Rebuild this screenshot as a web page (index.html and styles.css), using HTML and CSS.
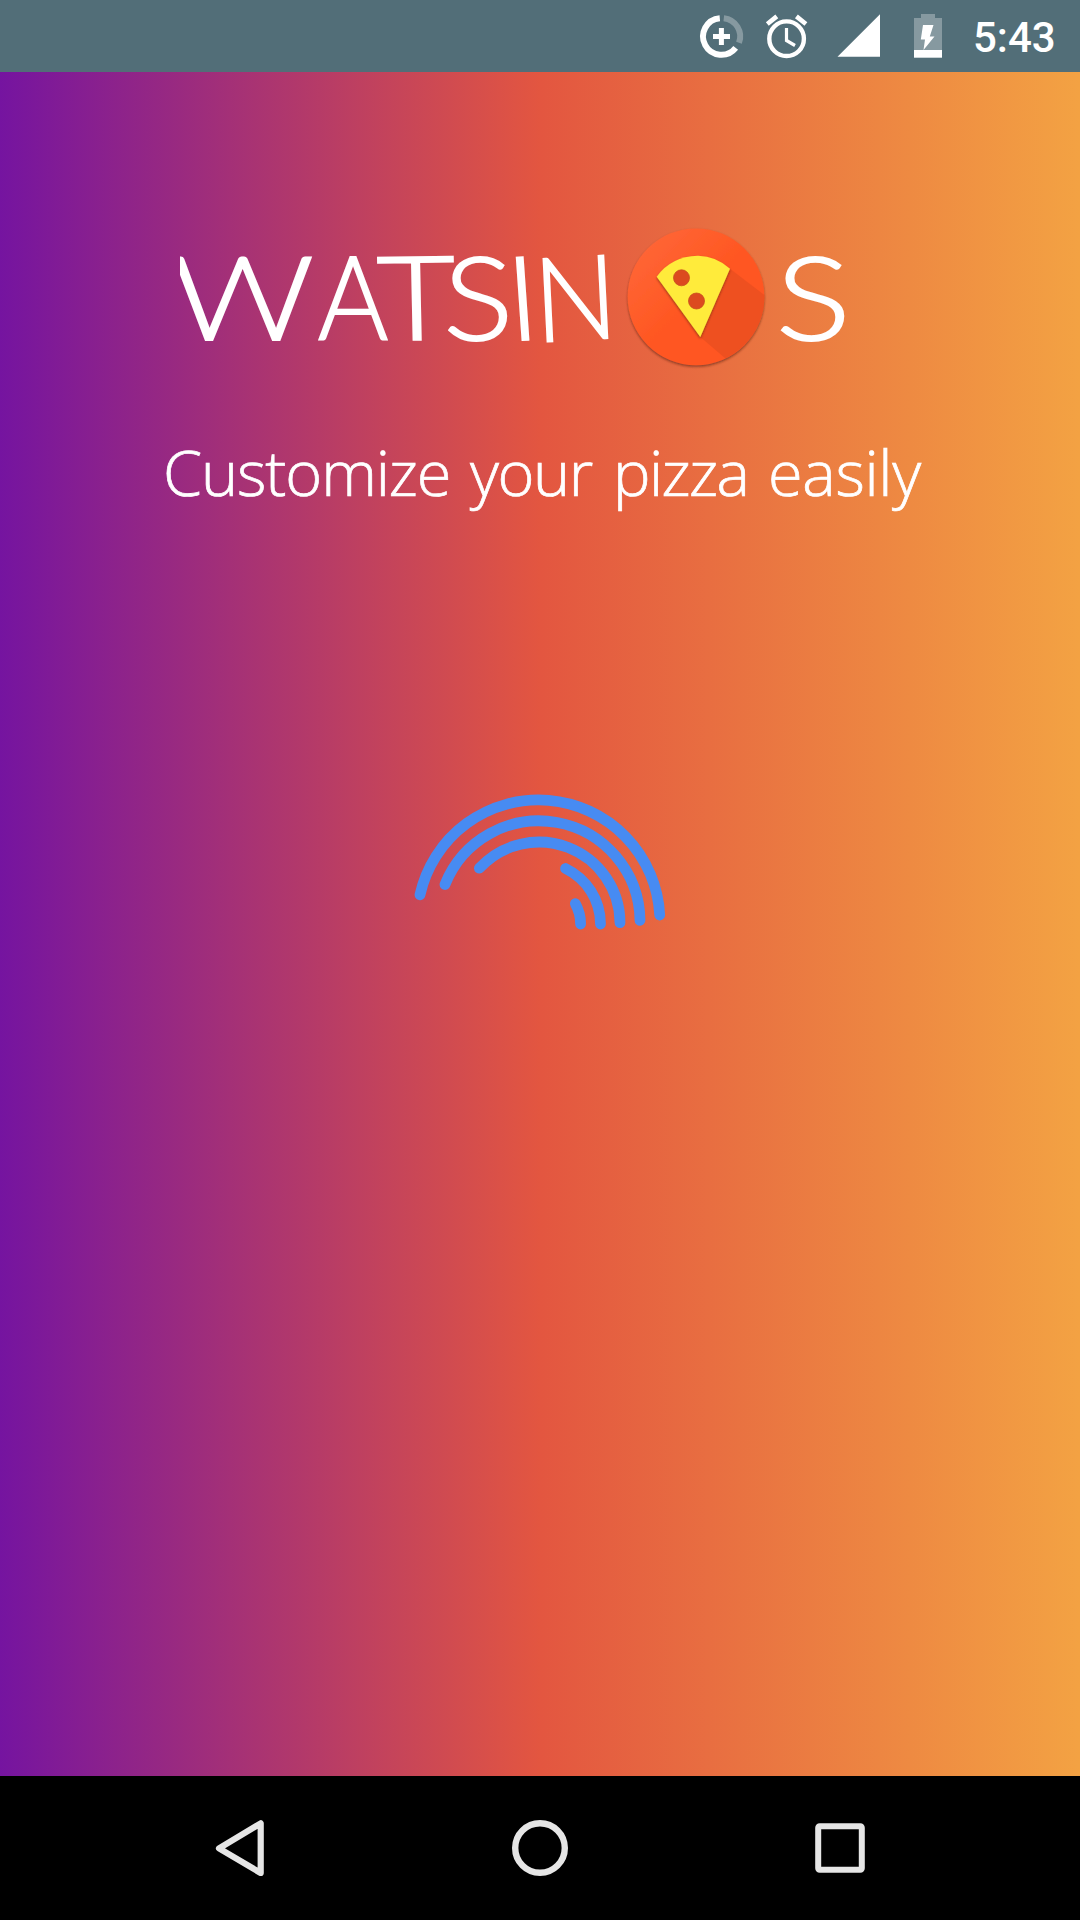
FILE: index.html
```html
<!DOCTYPE html>
<html lang="en">
<head>
<meta charset="utf-8">
<title>Watsinos</title>
<link rel="stylesheet" href="styles.css">
</head>
<body>
<header class="status">
  <svg class="status-icons" width="270" height="72" viewBox="690 0 270 72" aria-hidden="true">
    <g fill="none" stroke="#fff">
      <path d="M719.8 18.2A18.3 18.3 0 1 0 735.7 47.8" stroke-width="6"/>
      <path d="M723.8 18.2A18.3 18.3 0 0 1 739 42.8" stroke-width="6" opacity=".3"/>
      <path d="M721.4 28v17M713 36.5h17" stroke-width="5"/>
      <circle cx="786.6" cy="38.7" r="17.3" stroke-width="4.4"/>
      <path d="M786.5 28v12.5l8.5 5" stroke-width="3.2"/>
      <path d="M767.3 24l9.5-7.6M805.9 24l-9.5-7.6" stroke-width="4.6"/>
    </g>
    <g fill="#fff">
      <path d="M837.5 56.8H880V14.3z"/>
      <path d="M921 14h14v4h7v32h-28V18h7z" opacity=".3"/>
      <path d="M914 50h28v7.7h-28z"/>
      <path d="M923 25h10.5l-3.7 11.5h4.7L923.5 50l1.5-10.5h-4.2z"/>
    </g>
  </svg>
  <time class="clock">5:43</time>
</header>
<main class="splash">
  <h1 class="brand">
    <span class="word"><span class="l-w">W</span><span class="l-a">A</span><span class="l-t">T</span><span class="l-s">S</span><span class="l-i">I</span><span class="l-n">N</span></span>
    <svg class="pizza" width="146" height="146" viewBox="623 224 146 146" role="img" aria-label="o">
      <defs>
        <linearGradient id="disc" x1="0" y1="0" x2="1" y2="1">
          <stop offset="0" stop-color="#ff6a3c"/><stop offset=".5" stop-color="#ff5722"/><stop offset="1" stop-color="#ff5722"/>
        </linearGradient>
        <filter id="drop" x="-10%" y="-10%" width="120%" height="125%">
          <feDropShadow dx="0" dy="1.5" stdDeviation="1.3" flood-color="#50200a" flood-opacity=".6"/>
        </filter>
      </defs>
      <circle cx="696" cy="296.8" r="68.4" fill="url(#disc)" filter="url(#drop)"/>
      <path d="M730 268.7L764.4 295A68.4 68.4 0 0 1 725.5 358.5L700.3 337z" fill="#d94a1e" opacity=".45"/>
      <path d="M656.7 276.7Q671 256.5 698 255.7Q716 256 730 268.7L700.3 337z" fill="#ffeb3b" filter="url(#drop)"/>
      <g fill="#dc4a1f" stroke="#c6521e" stroke-width=".8"><circle cx="681.5" cy="277.8" r="8"/><circle cx="696.5" cy="301" r="8"/></g>
    </svg>
    <span class="tail"><span class="l-end">S</span></span>
  </h1>
  <p class="tagline"><span class="t1">Customize</span> <span class="t2">your</span> <span class="t3">pizza</span> <span class="t4">easily</span></p>
  <svg class="spinner" width="260" height="146" viewBox="410 790 260 146" aria-hidden="true">
    <g fill="none" stroke="#478bf2" stroke-width="10.8" stroke-linecap="round">
      <path d="M420 894.8A121.4 121.4 0 0 1 659.7 915"/>
      <path d="M445 884.5A101.1 101.1 0 0 1 640 920.3"/>
      <path d="M479.4 868.2A81 81 0 0 1 620 922.7"/>
      <path d="M565.5 868.5A62 62 0 0 1 600.5 924"/>
      <path d="M575.3 903.7A42 42 0 0 1 580.6 924"/>
    </g>
  </svg>
</main>
<nav class="navbar">
  <svg width="60" height="60" viewBox="210 1818 60 60" aria-hidden="true"><path d="M219 1848.3L260.7 1823.3V1873z" fill="none" stroke="#e6e6e6" stroke-width="6.2" stroke-linejoin="round"/></svg>
  <svg width="60" height="60" viewBox="510 1818 60 60" aria-hidden="true"><circle cx="540" cy="1848" r="24.8" fill="none" stroke="#e6e6e6" stroke-width="6.4"/></svg>
  <svg width="60" height="60" viewBox="810 1818 60 60" aria-hidden="true"><rect x="818.2" y="1826.2" width="43.6" height="43.6" rx="1.5" fill="none" stroke="#e6e6e6" stroke-width="6"/></svg>
</nav>
</body>
</html>
```
FILE: styles.css
```css
* { box-sizing: border-box; }
body {
  margin: 0;
  width: 1080px;
  height: 1920px;
  display: flex;
  flex-direction: column;
  overflow: hidden;
  color: #fff;
}
svg { display: block; flex: none; }
.status {
  height: 72px;
  display: flex;
  justify-content: flex-end;
  padding-right: 26px;
  background: #526e78;
}
.status-icons { margin-right: 13px; }
.clock {
  width: 81px;
  font: 500 42px/75px Roboto, sans-serif;
  white-space: nowrap;
}
.splash {
  flex: 1;
  display: flex;
  flex-direction: column;
  background: linear-gradient(90deg, #7514a0 0%, #e35640 50%, #f3a243 100%);
}
.brand {
  margin: 152px 0 0 180px;
  height: 146px;
  display: flex;
  font: 300 117px/142px Lato, sans-serif;
  -webkit-text-stroke: 1.8px #fff;
}
.word { width: 443px; white-space: nowrap; overflow: hidden; }
.word span, .l-end { display: inline-block; }
.l-w { width: 117px; transform: translateX(3px) scaleX(1.2); }
.l-a { width: 68px; transform: translateX(18px) scaleX(.92); }
.l-t { width: 66px; transform: translateX(17px) scaleX(1.16) rotate(-1deg); }
.l-s { width: 62px; transform: translateX(16px) scaleX(1.12); }
.l-i { width: 30px; transform: translateX(14px) rotate(-4deg); }
.l-n { transform: translateX(8px) scaleX(.94) rotate(-3deg); }
.tail { margin-left: 7px; }
.l-end { transform: translateX(6px) scaleX(1.2); }
.tagline {
  margin: 57px 0 0 163px;
  height: 90px;
  display: flex;
  font: 300 63px/90px "Open Sans", sans-serif;
  white-space: nowrap;
  -webkit-text-stroke: .7px #fff;
}
.t1 { width: 307px; letter-spacing: -1.1px; }
.t2 { width: 143px; letter-spacing: -1.4px; }
.t3 { width: 155px; letter-spacing: -1.6px; }
.t4 { letter-spacing: -.3px; }
.spinner { margin: 273px 0 0 410px; }
.navbar {
  height: 144px;
  display: flex;
  justify-content: space-between;
  align-items: center;
  padding: 0 210px;
  background: #000;
}
```
